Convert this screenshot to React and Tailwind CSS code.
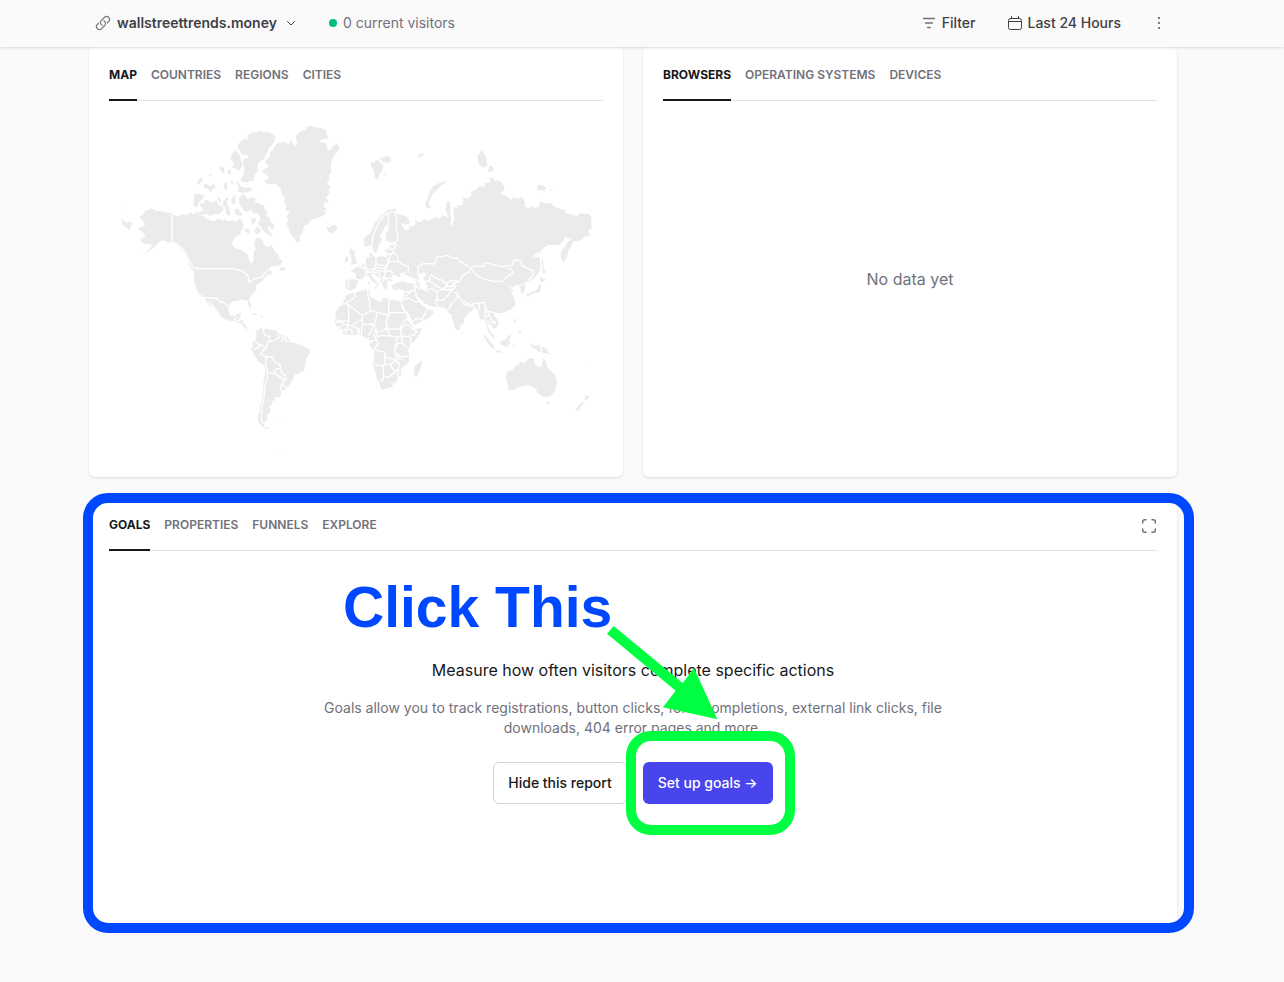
import { useState } from "react";

const AMERICAS_NORTH = [
  // mainland
  "M88 306 94 302 102 294 108 286 116 284 124 279 132 284 140 288 152 288 165 291 188 296 203 306 212 300 222 297 228 302 235 297 243 292 252 299 258 292 266 292 268 300 280 303 290 312 305 318 316 318 325 310 334 315 345 314 356 320 368 316 378 320 388 310 396 314 400 326 400 340 392 348 390 358 376 366 370 374 366 385 372 398 386 402 398 407 414 420 418 440 426 446 432 432 430 414 438 402 432 388 434 376 442 366 456 372 462 390 474 396 484 388 490 402 494 410 505 418 508 430 518 438 512 450 498 452 484 454 470 466 478 478 468 484 460 495 448 505 438 513 440 524 425 540 418 552 418 560 424 574 422 580 416 572 413 557 402 555 390 555 380 559 370 558 357 570 355 587 360 601 373 603 380 597 394 595 390 607 386 613 402 617 404 626 408 635 416 645 404 638 396 630 384 622 372 619 360 617 345 612 332 605 328 594 318 584 310 572 300 560 294 556 300 568 308 580 298 571 290 560 284 547 268 537 257 517 253 500 252 470 240 455 232 430 222 410 208 396 190 385 170 380 158 376 148 380 138 392 120 405 100 424 112 408 128 390 112 388 96 384 90 374 106 364 102 354 88 344 84 338 104 334 104 326 98 316Z",
  "M34 308 50 324 56 320 68 322 64 330 60 346 46 336 36 328ZM34 276 40 276 38 280Z",
  "M508 458 520 456 528 466 514 468ZM474 462 486 470 484 480 476 476Z",
  // arctic islands
  "M384 88 392 80 402 72 412 76 414 60 426 52 436 53 448 48 462 52 474 50 488 56 496 66 494 78 484 92 476 100 472 114 460 134 448 142 442 152 444 166 434 180 432 196 420 198 412 202 396 200 392 194 400 180 404 160 398 146 400 132 416 128 414 120 396 120 390 110 384 100Z",
  "M376 104 388 118 394 138 398 152 392 162 384 168 376 160 366 158 372 146 362 134 364 120Z",
  "M378 200 386 202 392 214 404 218 420 216 426 228 400 234 382 228 388 220Z",
  "M270 188 280 190 274 200 266 208 260 204ZM280 208 290 206 302 216 314 200 312 212 320 216 306 224 300 232 294 220 284 222Z",
  "M328 152 342 158 344 172 338 174 330 164ZM352 168 360 160 364 176 356 180ZM340 208 350 200 352 222 346 228ZM298 176 306 176 304 182 298 182ZM362 196 370 202 366 212ZM300 160 306 162 302 165Z",
  "M252 240 258 236 270 238 284 242 276 252 268 262 260 278 248 270 252 256Z",
  "M270 262 280 268 284 256 292 254 304 264 318 256 326 270 342 278 336 290 326 298 310 298 302 304 290 296 274 300 264 292 282 286 272 276Z",
  "M322 244 330 248 336 262 328 260ZM340 258 350 248 356 250 350 262 356 276 362 296 356 304 348 294 346 278 338 270Z",
  "M364 252 372 242 380 240 374 254 376 264 366 270ZM372 286 384 280 388 290 398 294 392 304 380 300Z",
  "M386 250 392 246 398 236 406 242 412 252 424 246 440 252 430 262 446 264 460 270 464 282 474 292 468 302 480 310 482 322 494 332 488 344 472 330 478 346 488 366 472 358 458 346 452 334 442 328 452 310 444 296 430 296 424 284 410 290 400 286 390 270Z",
  "M402 344 412 340 422 350 414 356ZM424 308 438 310 436 322 426 330ZM432 346 444 334 454 348 440 360Z",
  // greenland
  "M454 170 466 160 478 152 466 146 466 136 480 124 478 114 488 106 494 94 504 84 524 80 536 88 542 74 548 84 556 92 562 84 558 72 560 60 576 46 588 46 590 36 602 32 612 36 634 40 646 44 650 56 656 68 632 76 630 84 642 82 652 90 650 100 658 108 670 92 680 86 690 96 682 110 668 130 662 150 664 170 656 182 658 196 650 204 662 214 656 226 660 236 648 246 656 260 640 266 642 276 652 282 640 288 652 292 636 304 620 310 604 314 594 328 582 334 578 352 570 362 568 382 558 380 552 368 542 358 538 344 530 330 534 316 530 304 540 292 526 286 530 274 522 262 526 252 516 238 512 222 500 206 484 208 470 206 462 198 478 188 468 178Z",
];

const AMERICAS_SOUTH = [
  "M228 152 236 150 242 144 250 150 258 145 270 150 288 150 294 158 300 162 318 168 328 178 330 186 342 188 352 192 366 196 378 204 390 208 390 218 384 228 378 236 376 256 370 274 358 280 344 284 340 296 332 310 322 322 316 330 303 330 304 344 298 350 286 352 284 362 274 362 276 374 266 380 272 388 270 400 260 406 264 416 256 424 250 430 260 442 270 447 256 446 244 436 236 428 234 404 240 396 238 382 244 370 246 350 250 330 250 310 254 290 256 275 254 258 244 250 236 246 230 236 222 224 213 206 220 198 216 186 226 178 230 168Z",
  "M212 98 222 99 234 105 224 105ZM238 106 252 110 244 113ZM298 424 304 424 300 426ZM296 516 303 514 299 519Z",
  "M176 104 184 101 180 110Z",
];

const AFRICA =
  "M498 46 512 40 524 38 540 32 562 30 570 34 568 50 580 54 592 62 602 66 608 54 618 54 630 60 642 60 655 62 664 66 664 80 672 94 680 106 682 120 696 136 700 148 712 146 726 144 722 158 706 180 690 196 682 212 688 224 686 246 668 262 662 270 664 284 652 292 650 304 634 322 618 326 606 330 600 318 598 308 590 296 588 280 578 256 584 236 582 214 568 196 570 184 566 172 556 176 546 166 538 162 526 166 512 164 498 166 486 158 478 148 466 136 464 124 468 112 466 100 474 86 484 76 494 60Z";

const EURASIA = [
  "M136 322 132 310 131 294 148 282 158 268 164 250 176 236 182 226 194 220 204 208 216 210 222 205 230 210 228 220 246 224 262 232 270 244 266 252 250 254 246 248 242 252 250 260 256 272 266 268 270 254 274 262 286 254 286 238 292 246 302 246 314 238 326 242 338 234 350 232 360 236 366 224 378 232 384 232 380 216 376 208 380 186 388 182 392 196 390 220 394 236 390 254 396 256 404 236 400 216 400 200 412 204 412 194 420 196 428 196 430 172 442 176 454 168 452 154 466 150 478 138 492 140 496 130 508 128 512 114 520 112 524 122 536 122 546 130 554 138 552 150 540 162 556 164 562 172 574 180 580 172 598 176 606 172 614 184 614 198 626 206 630 198 644 204 656 200 660 184 676 190 690 188 702 200 720 206 732 208 740 222 754 222 770 228 782 220 808 222 814 232 814 266 804 272 810 288 794 290 784 300 772 304 762 302 756 308 754 320 746 330 742 348 730 368 722 350 724 332 734 322 740 310 750 300 756 290 744 296 736 290 728 304 716 316 700 314 682 316 668 326 660 336 644 342 640 350 658 352 662 372 660 392 652 406 640 416 626 424 612 430 616 444 610 458 604 460 602 446 596 438 588 434 582 442 570 440 572 448 582 448 574 458 584 476 586 494 574 508 560 512 552 518 534 520 524 516 520 524 528 532 536 546 534 558 522 568 512 554 502 548 502 556 510 572 524 590 524 596 514 588 504 574 500 560 494 536 484 540 478 530 474 514 466 502 454 514 442 522 432 538 432 550 422 556 420 570 414 574 406 564 398 542 394 522 386 520 380 506 370 502 346 500 332 498 326 494 312 490 306 480 296 474 290 466 282 464 294 480 302 494 314 500 322 508 338 512 342 520 330 532 312 542 296 548 282 556 276 542 268 524 256 510 246 490 248 474 254 456 248 450 236 448 222 450 214 438 226 430 250 424 266 430 280 430 290 428 282 416 268 410 250 400 258 396 246 398 238 402 244 410 236 412 226 404 216 404 214 414 218 424 206 424 198 430 204 440 198 450 192 444 188 434 182 426 180 416 168 406 160 400 152 404 162 416 176 432 174 440 166 430 154 422 146 408 138 408 124 418 114 424 108 444 92 452 78 448 76 436 78 420 96 418 108 418 108 402 92 390 104 386 114 376 122 378 134 368 138 354 150 350 148 340 156 338 158 348 172 352 184 348 198 352 202 340 194 332 200 324 214 326 206 316 226 314 232 302 216 308 198 302 196 282 206 268 204 254 198 256 184 280 180 290 186 300 178 312 172 332 164 340 158 330 156 312 146 318Z",
  "M18 258 28 264 36 256 50 256 52 268 36 280 24 276ZM90 322 96 330 104 332 102 346 108 356 112 370 90 376 96 364 92 354 94 346 88 338ZM76 352 86 348 84 364 74 368Z",
  "M152 66 162 68 168 60 178 64 190 78 184 96 178 102 172 120 164 112 164 98 156 84ZM180 52 190 54 200 46 212 52 214 62 202 70 188 66ZM194 96 202 104 194 107ZM290 46 300 44 306 38 310 44 300 54Z",
  "M376 122 378 128 362 138 352 148 338 162 330 178 326 190 334 206 318 202 316 192 322 176 330 152 340 138 356 130Z",
  "M472 50 478 42 484 30 496 44 500 60 502 76 490 84 480 76 474 64ZM504 96 508 76 518 82 522 90 514 96ZM650 138 664 134 678 142 674 152 652 150ZM684 148 698 150 694 154ZM660 172 670 172 666 176Z",
  "M664 358 668 358 670 372 672 386 678 398 668 402 668 384ZM660 408 666 416 678 414 668 426 660 424ZM660 428 664 444 656 460 646 458 636 462 622 472 624 462 640 454 652 448ZM618 462 626 462 622 472Z",
  "M424 572 430 580 426 584ZM160 440 172 442 168 448ZM144 424 150 424 150 436 146 436ZM584 506 588 508 584 516ZM582 534 588 540 588 550 582 546ZM598 572 604 574 600 580Z",
];

const OCEANIA = [
  "M318 310 326 304 338 300 346 288 354 286 362 274 374 280 384 268 394 264 404 268 402 278 416 290 424 290 428 276 430 264 438 276 440 286 446 298 456 306 464 316 470 326 470 344 464 362 456 376 440 382 424 378 414 368 406 356 400 352 384 346 360 350 346 358 326 362 324 346 318 328Z",
  "M440 394 450 396 446 406ZM556 376 568 380 562 388 554 392ZM546 394 552 400 542 410 536 422 526 418 536 408Z",
  "M248 192 256 196 268 212 280 224 286 238 276 234 262 218ZM286 240 300 242 312 248 292 247Z",
  "M300 214 314 210 322 202 328 192 332 198 328 208 330 220 322 230 310 228 302 224ZM338 222 348 224 342 226 344 234 338 230ZM356 184 364 182 360 192 354 190Z",
  "M388 220 396 222 402 228 416 224 428 230 440 236 444 246 454 256 440 248 424 250 414 244 408 236 400 236ZM567 288 570 290 567 291Z",
  "M64 270 66 280 62 294 54 316 46 320 41 308 44 288 56 280Z",
];

const NORTH_BORDERS = "M186 296V380L208 392 222 404 234 432 250 458 262 461H364L382 464 398 468 412 480 416 486 416 502 432 492 438 490 458 486 462 476 470 470";

const SOUTH_BORDERS =
  "M74 52 96 54 112 56 122 66 134 68 146 82M160 122 168 114 174 112M170 124 182 118 190 120M182 130 194 128M250 150 254 166 268 170 270 186 262 184 260 204 246 196 238 194 226 184 218 182M238 194 236 202 222 208M270 186 284 180 298 174 294 160M306 164 308 178 304 186M316 168 316 182 328 184M260 204 248 212 242 222 256 228 262 232 278 230 284 246 300 254 302 266 288 266 284 280 264 278 258 262 258 232M302 266 304 278 316 286 318 296 312 300 298 290 284 280M318 296 304 314 302 330M304 312 320 322M264 278 260 300 254 320 252 350 246 380 244 424 256 432M254 436 256 446";

const AFRICA_BORDERS =
  "M524 38 526 50 512 60 498 70 484 74M498 68 546 106 574 92 588 96 626 106V60M562 30 564 50 570 62 568 78 574 92M498 76 506 76 506 122 476 124 468 118M506 122 504 134 490 134 484 126 466 126M546 106 546 120 530 126 516 138 504 134M546 120 548 132 558 134 582 132 588 120 590 96M582 132 588 142 590 158 608 152 620 144 618 122 626 106M626 98H674M620 126 622 146 640 148 660 146 668 126 680 118M544 164 546 140 548 132M582 132 574 152 564 166M588 142 582 164 590 180 570 184M590 158 592 170 606 166 632 168 620 146M632 168 650 172 664 168 662 148 676 132 690 138 700 150 712 154 700 166 684 170 664 168M666 170V190L682 202M692 168V194M650 172V190H666M590 180 594 194 582 208 600 214 614 216 616 232 640 238 648 234 644 206 650 190M646 204 652 194M648 218 654 226 664 230 686 228M664 230 666 240M614 230V254L610 258 582 254M614 252 630 254 644 242 656 238 658 222M630 254 640 270 654 272 658 250 648 244M610 258V300L600 304M610 288 626 292 640 280 650 272M654 272V290M470 142 482 140 486 156M486 154 496 148 500 164M500 150 504 134M500 148 516 148V164M518 140 532 144V164M538 144V162M574 184V192";

const EURASIA_BORDERS =
  "M156 312 160 284 172 256 186 232 206 218 222 216 226 214M206 220 204 254M226 214 230 240 228 262 234 286 230 304M232 314 222 322 220 336 232 346 234 364 248 374 266 380 264 398M198 328 220 328M196 340 212 344 220 336M200 352 206 366 202 376 180 376 168 370 168 352M212 344 206 364 232 366M138 356 134 372 140 388 160 388 166 380 168 370M112 378 132 384 140 396 136 408M106 418 124 420M160 388 178 394 196 390 202 376M164 380 184 386 200 382M178 394 176 408 184 420M196 390 194 406 188 426M196 394 212 392 218 402M194 412 218 416M140 396 160 396 172 400M186 408 206 424M86 422 84 448M278 430 286 444 284 452 252 456M268 412 300 424M284 428 290 440 298 446M252 470 268 460 276 452M248 478 266 474 286 486 298 484M286 452 290 468M274 546 290 536 306 538 316 520 320 508M306 538 312 544M318 452 336 444 350 456 352 474 346 482 354 500M294 404 294 380 312 370 344 372 350 352 364 350 384 346 396 354 412 354 420 364 440 376 454 384 446 396 426 408 420 424 396 422 376 430 364 420 346 414 334 404 328 410 330 420 318 424M320 424 338 428 352 440 368 448 376 442 384 432M350 456 368 448 384 450 400 446 408 438 398 430 420 424M376 430 384 440 402 438M352 480 370 480 384 466 392 454 402 448M402 456 414 462 410 476 396 490 386 508M408 456 424 482 456 496 464 504M424 490 452 500M456 492 480 488 494 488 496 500 502 514 524 518M454 384 464 378 490 380 496 368 520 374 546 380 576 376 584 360 602 362 606 376 624 386 640 392 638 408 626 420M454 384 466 402 488 416 520 424 546 424 564 408 578 400 576 388 564 384M480 488 474 514M496 506 494 534M502 514 512 534 526 552M496 530 506 526M500 540 512 548 530 546M596 438 608 432";

const Land = ({ shapes, borders, x, y }) => (
  <g transform={`translate(${x} ${y})`}>
    {shapes.map((d) => (
      <path key={d} d={d} fill="#ebebed" />
    ))}
    {borders && <path d={borders} fill="none" stroke="#fff" strokeWidth="4" strokeLinejoin="round" />}
  </g>
);

const WorldMap = () => (
  <svg viewBox="0 0 1482 1035" className="block w-full" role="img" aria-label="World map">
    <Land shapes={AMERICAS_NORTH} borders={NORTH_BORDERS} x={3} y={15} />
    <Land shapes={AMERICAS_SOUTH} borders={SOUTH_BORDERS} x={213} y={510} />
    <Land shapes={[AFRICA]} borders={AFRICA_BORDERS} x={213} y={510} />
    <circle cx="853" cy="820" r="4" fill="none" stroke="#fff" strokeWidth="2" />
    <Land shapes={EURASIA} borders={EURASIA_BORDERS} x={633} y={90} />
    {/* caspian sea */}
    <path d="M927 494 945 487 953 494 941 504 949 514 955 530 949 543 933 536 931 518Z" fill="#fff" />
    <Land shapes={OCEANIA} borders="M424 226V250" x={873} y={480} />
  </svg>
);

const Tabs = ({ items, children }) => {
  const [active, setActive] = useState(items[0]);

  return (
    <div className="flex items-start justify-between border-b border-[#e4e4e7]">
      <div className="flex gap-3.5">
        {items.map((item) => (
          <button
            key={item}
            type="button"
            onClick={() => setActive(item)}
            className={
              item === active
                ? "-mb-px h-[34px] border-b-2 border-[#18181b] pb-4 text-xs font-bold uppercase text-[#18181b]"
                : "-mb-px h-[34px] border-b-2 border-transparent pb-4 text-xs font-semibold uppercase text-[#71717a]"
            }
          >
            {item}
          </button>
        ))}
      </div>
      {children}
    </div>
  );
};

const Card = ({ children }) => (
  <section className="relative flex min-h-[430px] flex-col rounded-md bg-white p-5 shadow-sm">{children}</section>
);

const LinkIcon = () => (
  <svg className="size-4" viewBox="0 0 24 24" fill="none" stroke="currentColor" strokeWidth="1.8" strokeLinecap="round" strokeLinejoin="round">
    <path d="M13.19 8.688a4.5 4.5 0 0 1 1.242 7.244l-4.5 4.5a4.5 4.5 0 0 1-6.364-6.364l1.757-1.757m13.35-.622 1.757-1.757a4.5 4.5 0 0 0-6.364-6.364l-4.5 4.5a4.5 4.5 0 0 0 1.242 7.244" />
  </svg>
);

const Header = () => (
  <header className="sticky top-0 z-20 bg-[#fafafa] pr-[18px] shadow-sm">
    <div className="mx-auto flex h-[47px] max-w-[1088px] items-center justify-between pb-0.5 pl-1.5 pr-2.5 text-sm font-medium text-[#3f3f46]">
      <div className="flex items-center">
        <button type="button" className="flex items-center gap-1.5 font-semibold">
          <span className="text-[#71717a]"><LinkIcon /></span>
          wallstreettrends.money
          <svg className="ml-0.5 size-3" viewBox="0 0 12 12" fill="none" stroke="currentColor" strokeLinecap="round" strokeLinejoin="round">
            <path d="m2.5 4.5 3.5 3.5 3.5-3.5" />
          </svg>
        </button>
        <a href="#visitors" className="ml-8 flex items-center gap-1.5 font-normal text-[#71717a]">
          <span className="size-2 rounded-full bg-[#00bc7d]" />
          0 current visitors
        </a>
      </div>
      <div className="flex items-center">
        <button type="button" className="flex items-center gap-1.5">
          <svg className="size-3.5" viewBox="0 0 14 14" fill="none" stroke="#71717a" strokeWidth="1.3" strokeLinecap="round">
            <path d="M1.5 2.5h11M3.5 7h7M5.7 11.5h2.6" />
          </svg>
          Filter
        </button>
        <button type="button" className="ml-8 flex items-center gap-1.5">
          <svg className="size-3.5" viewBox="0 0 14 14" fill="none" stroke="currentColor" strokeLinecap="round">
            <rect x="0.5" y="2.5" width="13" height="11" rx="2" />
            <path d="M3.5.5v2M10.5.5v2M.5 5.5h13" />
          </svg>
          Last 24 Hours
        </button>
        <button type="button" aria-label="More options" className="ml-[30px]">
          <svg className="size-4" viewBox="0 0 16 16" fill="currentColor">
            <circle cx="8" cy="3" r="0.9" />
            <circle cx="8" cy="8" r="0.9" />
            <circle cx="8" cy="13" r="0.9" />
          </svg>
        </button>
      </div>
    </div>
  </header>
);

const Goals = () => (
  <Card>
    <Tabs items={["Goals", "Properties", "Funnels", "Explore"]}>
      <button type="button" aria-label="Expand report" className="mt-px text-[#71717a]">
        <svg className="size-4" viewBox="0 0 16 16" fill="none" stroke="currentColor" strokeWidth="1.5" strokeLinecap="round">
          <path d="M1.7 5V3.7a2 2 0 0 1 2-2H5M11 1.7h1.3a2 2 0 0 1 2 2V5M14.3 11v1.3a2 2 0 0 1-2 2H11M5 14.3H3.7a2 2 0 0 1-2-2V11" />
        </svg>
      </button>
    </Tabs>

    <div className="flex flex-1 flex-col items-center justify-center pt-1 text-center">
      <h2 className="text-base font-normal text-[#18181b]">Measure how often visitors complete specific actions</h2>
      <p className="mt-4 max-w-[640px] text-sm text-[#71717a]">
        Goals allow you to track registrations, button clicks, form completions, external link clicks, file downloads, 404 error pages and more.
      </p>
      <div className="mt-6 flex gap-4">
        <button type="button" className="h-[42px] rounded-md border border-[#d4d4d8] px-3.5 text-sm font-medium text-[#18181b]">
          Hide this report
        </button>
        <div className="relative">
          <button type="button" className="h-[42px] rounded-md bg-[#4845ed] px-[15px] text-sm font-medium text-white">
            Set up goals →
          </button>
          <div className="pointer-events-none absolute -bottom-[31px] -left-[17px] -right-[22px] -top-[31px] rounded-[25px] border-10 border-[#00ff40]" />
          <svg className="pointer-events-none absolute -left-9 -top-[136px] h-[94px] w-[112px]" viewBox="0 0 336 282">
            <path d="M20 0 227 171 261 126 331 280 168 244 206 194 0 23Z" fill="#00ff40" />
          </svg>
        </div>
      </div>
    </div>

    <div className="pointer-events-none absolute -bottom-1.5 -left-1.5 -right-[17px] -top-1 rounded-[25px] border-10 border-[#0048ff]" />
    <strong className="absolute left-[254px] top-[77px] font-['Liberation_Sans',Arial,sans-serif] text-[57px] leading-[66px] text-[#0048ff]">
      Click This
    </strong>
  </Card>
);

const App = () => {
  return (
    <div className="min-h-screen bg-[#fafafa] font-[Inter,sans-serif]">
      <Header />
      <main className="pr-[18px]">
        <div className="mx-auto grid max-w-[1088px] grid-cols-2 gap-5 pb-14">
          <Card>
            <Tabs items={["Map", "Countries", "Regions", "Cities"]} />
            <div className="pt-[9px]">
              <WorldMap />
            </div>
          </Card>
          <Card>
            <Tabs items={["Browsers", "Operating Systems", "Devices"]} />
            <p className="flex flex-1 items-center justify-center text-base text-[#71717a]">No data yet</p>
          </Card>
          <div className="col-span-2">
            <Goals />
          </div>
        </div>
      </main>
    </div>
  );
};

export default App;
